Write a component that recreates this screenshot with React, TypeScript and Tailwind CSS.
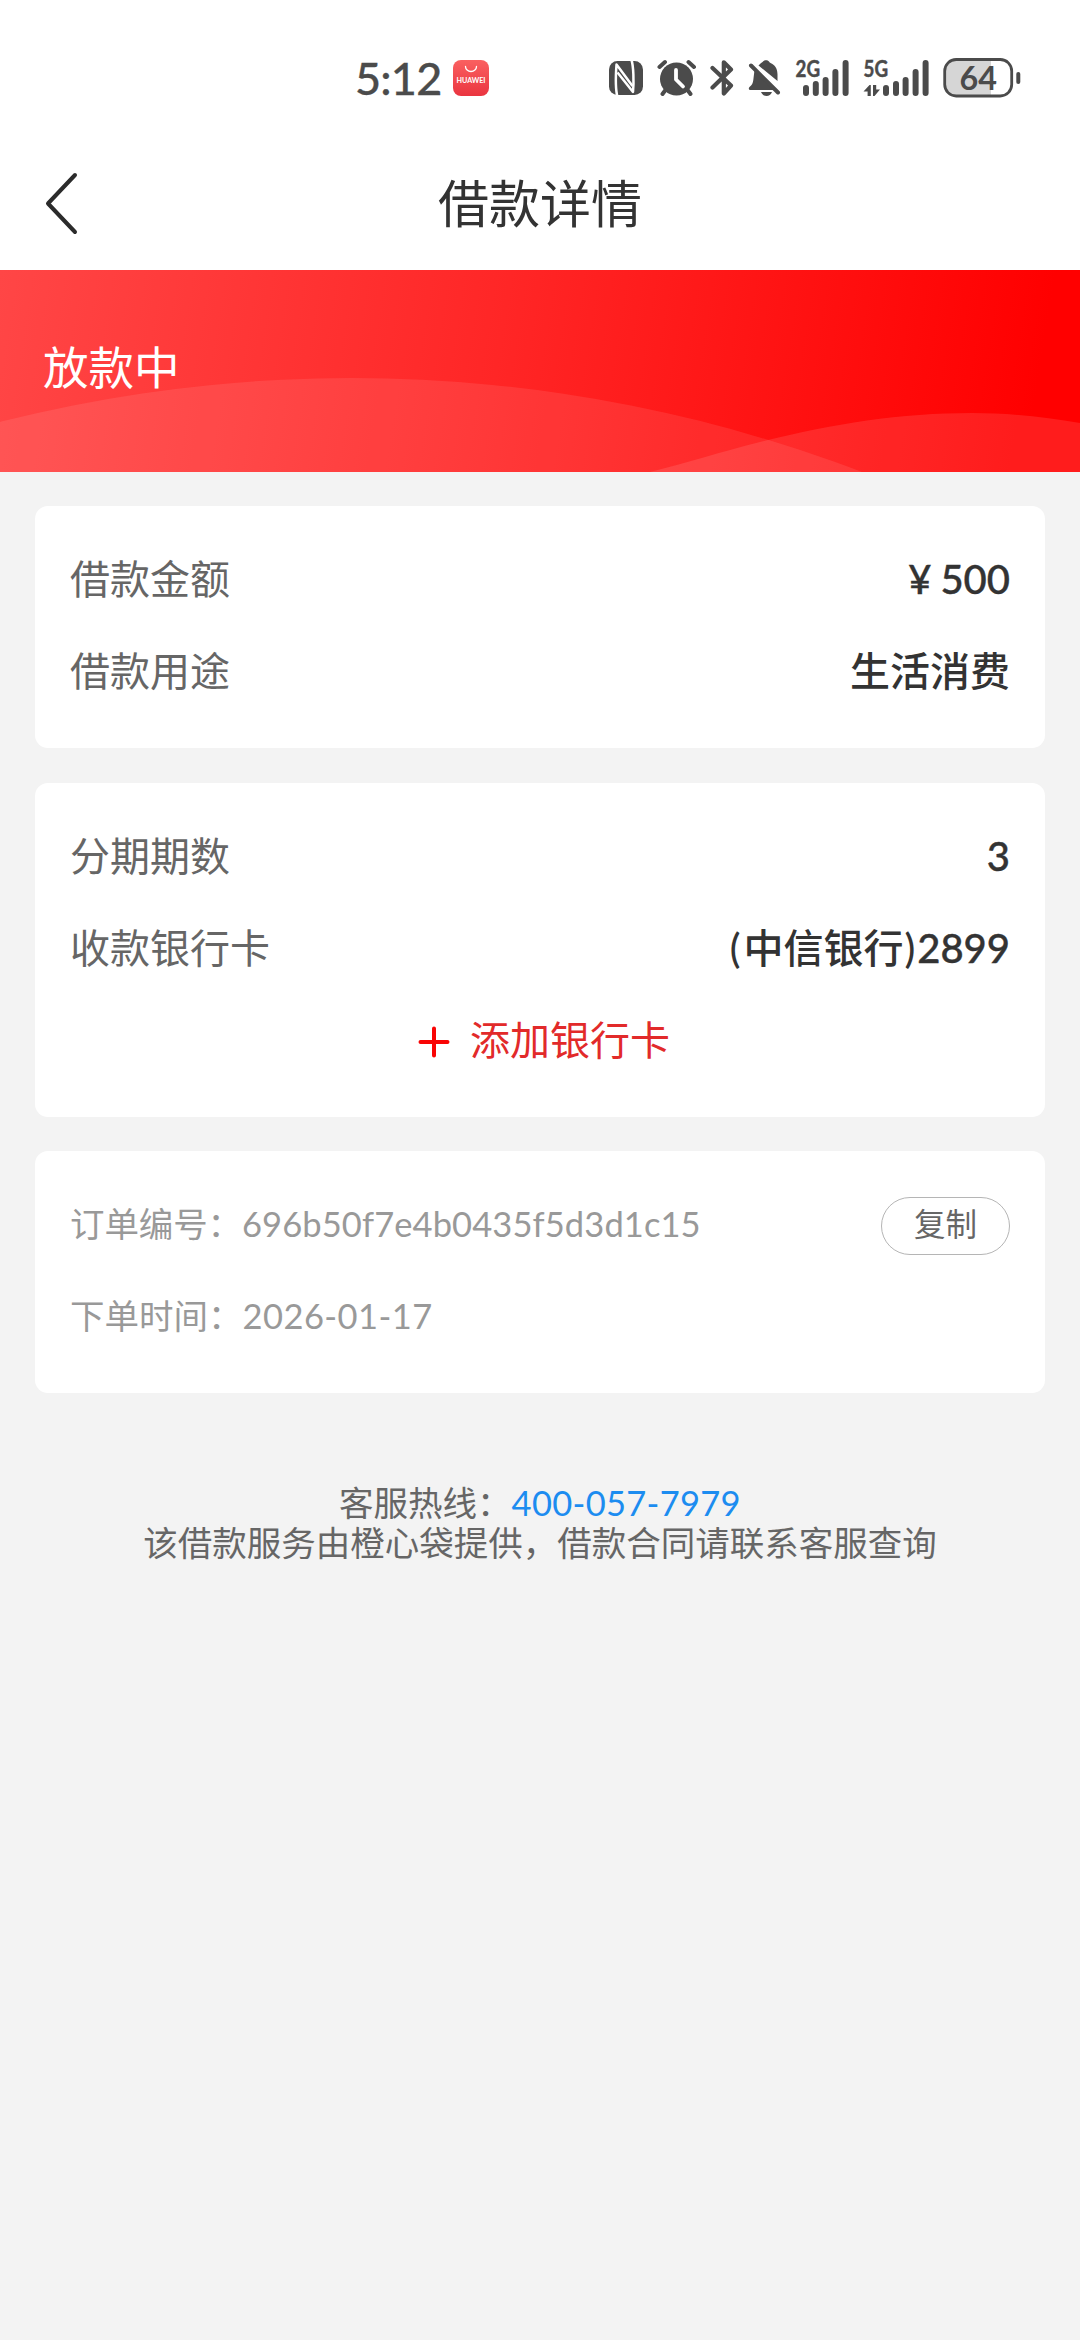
import type { ReactNode } from 'react';

const INK = '#4b4b4b';

function StatusIcons() {
  return (
    <div className="flex h-[44px] items-center">
      {/* NFC */}
      <svg className="h-[44px] w-[34px]" viewBox="609 56 34 44" fill="none">
        <rect x="609" y="61" width="34" height="34" rx="8.500" fill={INK} />
        <path d="M617.500 97C615.500 90 615.800 74 616.500 64.500L632.500 86" stroke="#fff" strokeWidth="2.500" strokeLinejoin="round" />
        <path d="M631.500 60C633.500 66 634 82 633 92L617.500 72.500" stroke="#fff" strokeWidth="2.500" strokeLinejoin="round" />
      </svg>
      {/* Alarm */}
      <svg className="ml-[14px] h-[44px] w-[40px]" viewBox="657 56 40 44" fill="none" strokeLinecap="round">
        <circle cx="676.500" cy="79" r="16.500" fill={INK} />
        <path d="M659.500 67L665 62M694 67L688.500 62M665.500 90L662.500 94M687.500 90L690.500 94" stroke={INK} strokeWidth="4" />
        <path d="M676 70V79.500L683 86.500" stroke="#fff" strokeWidth="3.800" strokeLinejoin="round" />
      </svg>
      {/* Bluetooth */}
      <svg className="ml-[13px] h-[44px] w-[24px]" viewBox="710 56 24 44" fill="none">
        <path d="M712.500 68L731 85.500L723.800 93.500V62.300L731 69.500L712.500 87.500" stroke={INK} strokeWidth="4.200" strokeLinecap="round" strokeLinejoin="round" />
      </svg>
      {/* Muted bell */}
      <svg className="ml-[14px] h-[44px] w-[34px]" viewBox="748 56 34 44">
        <path d="M760.500 63.500C762 62.500 762.500 62 763 61.500C764.500 59.700 767.500 59.700 769 61.500C769.500 62.500 770.500 63 772 63.700C776 66 777.500 70 777.500 74.500V81L758.500 65.500Z" fill={INK} />
        <path d="M754.500 70L774 87.500L777 90H750C748.500 89.500 748.500 88 749.500 87C752 85 753 83 753.300 80Z" fill={INK} />
        <path d="M761 92H772C771 94.500 769 96 766.500 96C764 96 762 94.500 761 92Z" fill={INK} />
        <path d="M751 65.500L778 92.500" stroke={INK} strokeWidth="4" strokeLinecap="round" />
      </svg>
      {/* 2G signal */}
      <svg className="ml-[13px] h-[54px] w-[54px] overflow-visible" viewBox="795 51 54 54">
        <text x="795.500" y="77" fill={INK} stroke={INK} strokeWidth="0.5" fontSize="23" fontWeight="700" textLength="24.500" lengthAdjust="spacingAndGlyphs" className="font-[Lato,sans-serif]">2G</text>
        <path d="M806 88V93M815.800 84V93M825.600 80V93M835.400 72V93M845.600 63V93" stroke={INK} strokeWidth="6" strokeLinecap="round" />
      </svg>
      {/* 5G signal */}
      <svg className="ml-[14px] h-[54px] w-[66px] overflow-visible" viewBox="863 51 66 54">
        <text x="863.500" y="77" fill={INK} stroke={INK} strokeWidth="0.5" fontSize="23" fontWeight="700" textLength="24.500" lengthAdjust="spacingAndGlyphs" className="font-[Lato,sans-serif]">5G</text>
        <path d="M870.800 85V96H867.600V91.500H863.500L869.500 85ZM873 85H876.200V89.500H880L874.500 96H873Z" fill={INK} />
        <path d="M886 88V93M896 84V93M905.600 80V93M915.600 72V93M925.600 63V93" stroke={INK} strokeWidth="6" strokeLinecap="round" />
      </svg>
      {/* Battery */}
      <svg className="ml-[14px] h-[44px] w-[78px]" viewBox="943 56 78 44">
        <path d="M991 60H956Q945 60 945 71V84Q945 95 956 95H991Z" fill="#d6d6d6" />
        <rect x="944.700" y="59.500" width="67" height="36.500" rx="11.500" fill="none" stroke={INK} strokeWidth="2.800" />
        <path d="M1018.300 74V82" stroke={INK} strokeWidth="4" strokeLinecap="round" />
        <text x="959.500" y="89.800" fill={INK} fontSize="33" fontWeight="700" textLength="37.500" lengthAdjust="spacingAndGlyphs" className="font-[Lato,sans-serif]">64</text>
      </svg>
    </div>
  );
}

function StatusBar() {
  return (
    <div className="flex h-[114px] items-start pt-[56px] pl-[355px]">
      <span className="h-[44px] w-[86px] whitespace-nowrap text-[45px] leading-[44px] font-medium tracking-[-0.8px] text-[#4b4b4b] [-webkit-text-stroke:0.3px_#4b4b4b]">5:12</span>
      <svg className="ml-[12px] h-[44px] w-[36px]" viewBox="453 56 36 44">
        <defs>
          <linearGradient id="store" x1="0" y1="0" x2="0" y2="1">
            <stop offset="0" stopColor="#fa6060" />
            <stop offset="1" stopColor="#ea3540" />
          </linearGradient>
        </defs>
        <rect x="453" y="60" width="36" height="36" rx="8" fill="url(#store)" />
        <path d="M465.500 66.500A5.500 5 0 0 0 476.500 66.500" fill="none" stroke="#fff" strokeWidth="1.300" strokeLinecap="round" />
        <text x="456.500" y="83" fill="#fff" fontSize="7.500" fontWeight="700" textLength="29" lengthAdjust="spacingAndGlyphs" className="font-[Lato,sans-serif]">HUAWEI</text>
      </svg>
      <div className="ml-[120px]">
        <StatusIcons />
      </div>
    </div>
  );
}

function Header() {
  return (
    <header className="grid h-[156px] grid-cols-[1fr_auto_1fr] items-center pt-[23px]">
      <svg className="ml-[44px] h-[64px] w-[34px]" viewBox="0 0 34 64" fill="none">
        <path d="M31 3L4 31.500L31 60" stroke="#2b2b2b" strokeWidth="4" strokeLinecap="round" strokeLinejoin="round" />
      </svg>
      <h1 className="text-[51px] leading-[60px] text-[#333]">借款详情</h1>
    </header>
  );
}

function Banner() {
  return (
    <section className="relative flex h-[202px] items-center bg-[linear-gradient(99deg,#ff4646_0%,#ff2626_46%,#ff1515_68%,#ff0000_95%)]">
      <svg className="absolute inset-0 h-full w-full" viewBox="0 270 1080 202" fill="#fff">
        <circle cx="352" cy="1808" r="1430" fillOpacity="0.09" />
        <path d="M650 472C686 463 720 452 760 442C832 424 900 413 972 413C1010 413 1046 417 1080 423V472Z" fillOpacity="0.11" />
      </svg>
      <p className="relative pb-[6px] pl-[43px] text-[45.500px] leading-[60px] text-white">放款中</p>
    </section>
  );
}

function Card({ children }: { children: ReactNode }) {
  return <section className="rounded-[13px] bg-white px-[35px] pt-[27px] pb-[31px]">{children}</section>;
}

function Row({ label, children }: { label: string; children: ReactNode }) {
  return (
    <div className="flex h-[92px] items-center justify-between text-[40px] leading-[60px]">
      <span className="text-[#666]">{label}</span>
      <span className="font-medium text-[#333]">{children}</span>
    </div>
  );
}

/* Latin digits carry a hairline stroke so they weigh the same as the medium CJK glyphs. */
function Figure({ children }: { children: ReactNode }) {
  return <span className="[-webkit-text-stroke:0.4px_#333]">{children}</span>;
}

export default function App() {
  return (
    <div className="h-[2340px] w-[1080px] overflow-hidden bg-[#f3f3f3] font-[Lato,'Noto_Sans_CJK_SC',sans-serif]">
      <div className="bg-white">
        <StatusBar />
        <Header />
      </div>
      <Banner />
      <main className="flex flex-col gap-[34.500px] px-[35px] pt-[34px]">
        <Card>
          <Row label="借款金额">
            <Figure>
              <span className="mr-[9px]">¥</span>500
            </Figure>
          </Row>
          <Row label="借款用途">生活消费</Row>
        </Card>
        <Card>
          <Row label="分期期数">
            <Figure>3</Figure>
          </Row>
          <Row label="收款银行卡">
            <span className="mr-[3px]">(</span>中信银行<span className="mr-[2px] ml-[1px]">)</span>
            <Figure>2899</Figure>
          </Row>
          <button className="flex h-[92px] w-full items-center justify-center gap-[20px] pl-[8px] text-[40px] leading-[60px] text-[#e22a2a]">
            <svg className="mt-[5px] h-[32px] w-[32px]" viewBox="0 0 32 32">
              <path d="M16 2.500V29.500M2.500 16H29.500" stroke="#f90505" strokeWidth="4" strokeLinecap="round" />
            </svg>
            添加银行卡
          </button>
        </Card>
        <Card>
          <div className="flex h-[92px] items-center justify-between text-[34.500px] leading-[52px] text-[#999]">
            <span>
              <span className="tracking-[-0.1px]">订单编号：</span>
              <span className="tracking-[0.1px]">696b50f7e4b0435f5d3d1c15</span>
            </span>
            <button className="mt-[4px] flex h-[58px] w-[129px] items-center justify-center rounded-full border border-[#b5b5b5] pb-[5px] text-[31.500px] text-[#666]">
              复制
            </button>
          </div>
          <div className="flex h-[92px] items-center text-[34.500px] leading-[52px] text-[#999]">
            <span>
              下单时间：<span className="tracking-[0.45px]">2026-01-17</span>
            </span>
          </div>
        </Card>
      </main>
      <footer className="pt-[90px] text-center text-[34.500px] leading-[40px] text-[#666]">
        <p>
          客服热线：<span className="tracking-[0.3px] text-[#1c8cf0]">400-057-7979</span>
        </p>
        <p>该借款服务由橙心袋提供，借款合同请联系客服查询</p>
      </footer>
    </div>
  );
}
